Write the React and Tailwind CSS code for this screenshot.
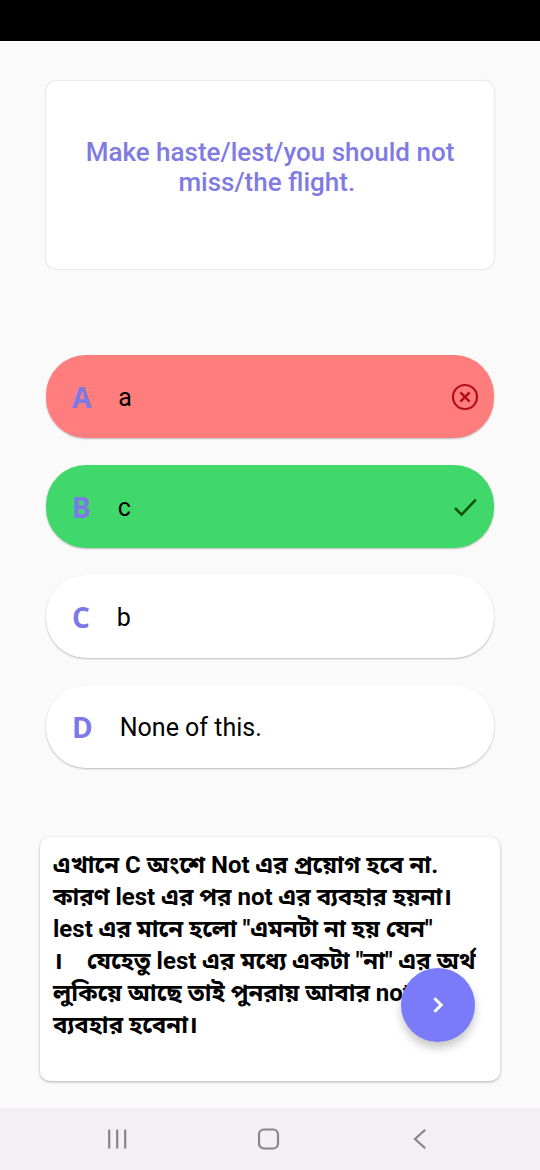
import React from "react";

const options = [
  { letter: "A", text: "a", state: "wrong" },
  { letter: "B", text: "c", state: "right" },
  { letter: "C", text: "b", state: "idle" },
  { letter: "D", text: "None of this.", state: "idle" },
];

const optionColors = {
  wrong: "bg-[#ff7d7d]",
  right: "bg-[#41d86b]",
  idle: "bg-white",
};

function WrongIcon() {
  return (
    <svg className="size-7" viewBox="0 0 28 28" fill="none" stroke="#b01018" aria-label="Wrong answer" role="img">
      <circle cx="14" cy="14" r="12" strokeWidth="2.2" />
      <path d="M9.4 9.4l9.2 9.2M18.6 9.4l-9.2 9.2" strokeWidth="2.6" />
    </svg>
  );
}

function RightIcon() {
  return (
    <svg className="size-7" viewBox="0 0 28 28" fill="none" stroke="#0b5410" aria-label="Correct answer" role="img">
      <path d="M4 15l6.6 6.6L24.8 6.6" strokeWidth="2.6" />
    </svg>
  );
}

function Option({ letter, text, state }) {
  return (
    <button
      type="button"
      className={`flex h-[83px] w-full items-center rounded-[40px] pl-[26px] pr-[15px] text-left shadow-[0_1px_2px_rgba(0,0,0,0.26)] ${optionColors[state]}`}
    >
      <span className="font-['Open_Sans',sans-serif] text-[28px] leading-8 font-bold text-[#7d78e8]">{letter}</span>
      <span className="ml-[27px] flex-1 pt-0.5 text-[25px] leading-8 text-black">{text}</span>
      {state === "wrong" && <WrongIcon />}
      {state === "right" && <RightIcon />}
    </button>
  );
}

export default function App() {
  return (
    <div className="flex min-h-screen flex-col bg-[#fbfafb] font-['Roboto','Noto_Sans_Bengali',sans-serif]">
      <div className="h-[41px] bg-black" />

      <main className="flex-1 px-10 pt-10 pb-[27px]">
        <section className="mx-[6px] flex h-[188px] items-start justify-center rounded-[10px] bg-white px-6 pt-14 shadow-[0_0_2px_rgba(0,0,0,0.24)]">
          <h1 className="text-center text-[26px] leading-[30px] font-medium text-[#807be3]">
            Make haste/lest/you should not miss/the flight.&nbsp;
          </h1>
        </section>

        <div className="mx-[6px] mt-[86px] flex flex-col gap-[27px]">
          {options.map((o) => (
            <Option key={o.letter} {...o} />
          ))}
        </div>

        <section className="relative mt-[69px] h-[244px] rounded-[10px] bg-white px-[13px] pt-3 shadow-[0_1px_3px_rgba(0,0,0,0.3)]">
          <p className="text-[24px] leading-8 font-bold whitespace-nowrap text-black">
            এখানে C অংশে Not এর প্রয়োগ হবে না.
            <br />
            কারণ lest এর পর not এর ব্যবহার হয়না।
            <br />
            lest এর মানে হলো "এমনটা না হয় যেন"
            <br />
            ।&nbsp;&nbsp;&nbsp; যেহেতু lest এর মধ্যে একটা "না" এর অর্থ
            <br />
            লুকিয়ে আছে তাই পুনরায় আবার not
            <br />
            ব্যবহার হবেনা।
          </p>
          <button
            type="button"
            aria-label="Next question"
            className="absolute right-[25px] bottom-[39px] flex size-[74px] items-center justify-center rounded-full bg-[#7a7bf8] shadow-[0_6px_10px_rgba(0,0,0,0.22)]"
          >
            <svg className="size-6" viewBox="0 0 24 24" fill="none" stroke="#fff" strokeWidth="3">
              <path d="M8.4 5.2l6.8 6.8-6.8 6.8" />
            </svg>
          </button>
        </section>
      </main>

      <nav className="flex h-[62px] items-center justify-between bg-[#f2f0f2] px-[105px]">
        <button type="button" aria-label="Recent apps">
          <svg className="size-6" viewBox="0 0 24 24" fill="none" stroke="#868588" strokeWidth="2.2">
            <path d="M4.2 2.5v19M12.2 2.5v19M20.2 2.5v19" />
          </svg>
        </button>
        <button type="button" aria-label="Home">
          <svg className="size-6" viewBox="0 0 24 24" fill="none" stroke="#868588" strokeWidth="2.2">
            <rect x="1" y="2.5" width="19" height="19" rx="5" />
          </svg>
        </button>
        <button type="button" aria-label="Back">
          <svg className="size-6" viewBox="0 0 24 24" fill="none" stroke="#868588" strokeWidth="2.2">
            <path d="M14.2 2.8L4 12l10.2 9.2" />
          </svg>
        </button>
      </nav>
    </div>
  );
}
